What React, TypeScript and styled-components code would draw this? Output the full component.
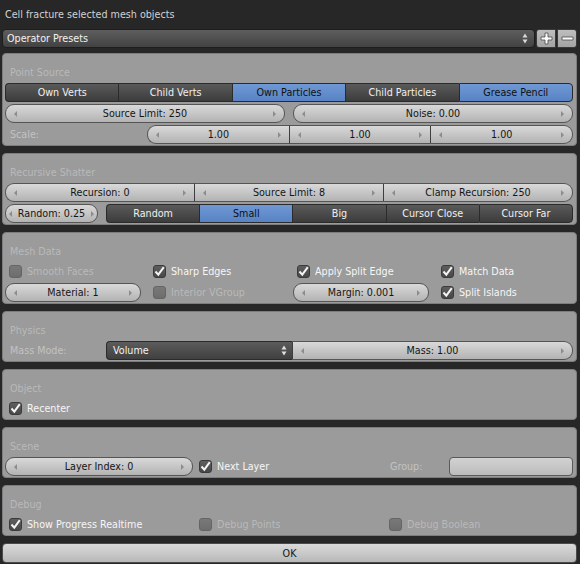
import styled, { createGlobalStyle, css } from "styled-components";

const GlobalStyle = createGlobalStyle`
    body {
        margin: 0;
        background: #262626;
        font-family: "DejaVu Sans", "Liberation Sans", sans-serif;
        font-size: 9.6px;
    }
`;

const Window = styled.div`
    width: 580px;
    height: 564px;
    overflow: hidden;
    background: #272727;
`;

const TitleBar = styled.div`
    height: 29px;
    display: flex;
    align-items: center;
    padding-left: 5px;
    color: #d2d2d2;
`;

const PresetsRow = styled.div`
    display: flex;
    height: 19px;
    margin: 0 3px 5px 2px;
    gap: 1px;
`;

const PresetSelect = styled.div`
    flex: 1;
    display: flex;
    align-items: center;
    justify-content: space-between;
    padding: 0 6px 0 4px;
    color: #f2f2f2;
    background: linear-gradient(#5e5e5e, #424242);
    border: 1px solid #1e1e1e;
    border-radius: 4px;
`;

const IconBtn = styled.div`
    width: 18px;
    display: flex;
    align-items: center;
    justify-content: center;
    background: linear-gradient(#bdbdbd, #a4a4a4);
    border: 1px solid #3a3a3a;
    border-radius: ${(p: { $side: "left" | "right" }) => (p.$side === "left" ? "3px 0 0 3px" : "0 3px 3px 0")};
`;

const Panel = styled.div`
    margin: 0 3px 7px 2px;
    background: #9b9b9b;
    border: 1px solid #7d7d7d;
    border-radius: 4px;
    padding: 8px 3px 1px 2px;
`;

const PanelTitle = styled.div`
    height: 21px;
    display: flex;
    align-items: center;
    padding-left: 5px;
    color: #b9b9b9;
`;

const Rows = styled.div`
    display: flex;
    flex-direction: column;
    gap: 2px;
`;

const Row = styled.div`
    display: flex;
    height: 19px;
    gap: ${(p: { $gap?: number }) => p.$gap ?? 8}px;
`;

const Grid = styled.div`
    display: grid;
    grid-template-columns: ${(p: { $cols: number; $gap: number }) => `repeat(${p.$cols}, 1fr)`};
    column-gap: ${(p) => p.$gap}px;
    row-gap: 2px;
    grid-auto-rows: 19px;
`;

const Label = styled.div`
    box-sizing: border-box;
    display: flex;
    align-items: center;
    padding-left: 5px;
    color: #c2c2c2;
    width: ${(p: { $w?: number }) => (p.$w ? `${p.$w}px` : "auto")};
    flex-shrink: 0;
`;

const Joined = styled.div`
    flex: 1;
    display: flex;
    min-width: 0;
`;

type Pos = "single" | "left" | "mid" | "right";

const radius = (pos: Pos, r: number) => {
    if (pos === "single") return `${r}px`;
    if (pos === "left") return `${r}px 0 0 ${r}px`;
    if (pos === "right") return `0 ${r}px ${r}px 0`;
    return "0";
};

const NumBox = styled.div<{ $pos: Pos; $w?: number }>`
    position: relative;
    box-sizing: border-box;
    height: 19px;
    ${(p) => (p.$w ? css`width: ${p.$w}px; flex-shrink: 0;` : css`flex: 1;`)}
    display: flex;
    align-items: center;
    justify-content: center;
    color: #151515;
    background: linear-gradient(#d9d9d9, #c4c4c4 55%, #b3b3b3);
    border: 1px solid #555;
    ${(p) => p.$pos === "mid" || p.$pos === "right" ? "border-left: 1px solid #3e3e3e;" : ""}
    ${(p) => p.$pos === "left" || p.$pos === "mid" ? "border-right: none;" : ""}
    border-radius: ${(p) => radius(p.$pos, 9)};
    white-space: nowrap;

    &::before, &::after {
        content: "";
        position: absolute;
        top: 6px;
        border-top: 3px solid transparent;
        border-bottom: 3px solid transparent;
    }
    &::before {
        left: ${(p) => (p.$w && p.$w < 100 ? 3 : 8)}px;
        border-right: 3px solid #8c8c8c;
    }
    &::after {
        right: ${(p) => (p.$w && p.$w < 100 ? 3 : 8)}px;
        border-left: 3px solid #8c8c8c;
    }
`;

const EnumGroup = styled.div`
    flex: 1;
    display: flex;
    min-width: 0;
`;

const EnumBtn = styled.div<{ $active?: boolean; $pos: Pos }>`
    flex: 1;
    display: flex;
    align-items: center;
    justify-content: center;
    box-sizing: border-box;
    height: 19px;
    border: 1px solid #2b2b2b;
    ${(p) => (p.$pos === "left" || p.$pos === "mid" ? "border-right: none;" : "")}
    border-radius: ${(p) => radius(p.$pos, 4)};
    color: ${(p) => (p.$active ? "#101010" : "#f0f0f0")};
    background: ${(p) =>
        p.$active ? "linear-gradient(#6f98d4, #5883c4)" : "linear-gradient(#5a5a5a, #3c3c3c)"};
    white-space: nowrap;
`;

const Dropdown = styled.div`
    width: 186px;
    flex-shrink: 0;
    box-sizing: border-box;
    display: flex;
    align-items: center;
    justify-content: space-between;
    padding: 0 5px 0 6px;
    color: #f4f4f4;
    background: linear-gradient(#5c5c5c, #404040);
    border: 1px solid #2b2b2b;
    border-right: none;
    border-radius: 4px 0 0 4px;
`;

const CheckRow = styled.div`
    display: flex;
    align-items: center;
    gap: 5px;
    padding-left: 4px;
    white-space: nowrap;
    color: ${(p: { $disabled?: boolean }) => (p.$disabled ? "#b9b9b9" : "#f6f6f6")};
`;

const Box = styled.div<{ $disabled?: boolean }>`
    width: 13px;
    height: 13px;
    box-sizing: border-box;
    border-radius: 3px;
    border: 1px solid #3a3a3a;
    background: linear-gradient(#5e5e5e, #484848);
    opacity: ${(p) => (p.$disabled ? 0.55 : 1)};
    display: flex;
    align-items: center;
    justify-content: center;
`;

const TextField = styled.div`
    flex: 1;
    box-sizing: border-box;
    background: linear-gradient(#d2d2d2, #bcbcbc);
    border: 1px solid #5a5a5a;
    border-radius: 4px;
`;

const OkButton = styled.div`
    margin: 0 3px 0 2px;
    height: 18px;
    display: flex;
    align-items: center;
    justify-content: center;
    color: #151515;
    background: linear-gradient(#dadada, #c6c6c6 60%, #b8b8b8);
    border: 1px solid #4a4a4a;
    border-radius: 4px;
`;

function UpDown({ color }: { color: string }) {
    return (
        <svg width="6" height="11" viewBox="0 0 6 11">
            <path d="M3 0.5 L5.5 4.5 L0.5 4.5 Z M3 10.5 L5.5 6.5 L0.5 6.5 Z" fill={color} />
        </svg>
    );
}

function Num({ text, pos = "single", w }: { text: string; pos?: Pos; w?: number }) {
    return (
        <NumBox $pos={pos} $w={w}>
            {text}
        </NumBox>
    );
}

function Check({ label, checked, disabled }: { label: string; checked?: boolean; disabled?: boolean }) {
    return (
        <CheckRow $disabled={disabled}>
            <Box $disabled={disabled}>
                {checked && (
                    <svg width="11" height="11" viewBox="0 0 11 11">
                        <path d="M1.5 5.5 L4.3 8.6 L9.8 1.2" stroke="#f5f5f5" strokeWidth="2" fill="none" />
                    </svg>
                )}
            </Box>
            {label}
        </CheckRow>
    );
}

function Enum({ items, active }: { items: string[]; active: string[] }) {
    return (
        <EnumGroup>
            {items.map((it, i) => (
                <EnumBtn
                    key={it}
                    $active={active.includes(it)}
                    $pos={i === 0 ? "left" : i === items.length - 1 ? "right" : "mid"}
                >
                    {it}
                </EnumBtn>
            ))}
        </EnumGroup>
    );
}

const posOf = (i: number, n: number): Pos => (i === 0 ? "left" : i === n - 1 ? "right" : "mid");

export default function App() {
    return (
        <Window>
            <GlobalStyle />
            <TitleBar>Cell fracture selected mesh objects</TitleBar>

            <PresetsRow>
                <PresetSelect>
                    Operator Presets
                    <UpDown color="#d8d8d8" />
                </PresetSelect>
                <IconBtn $side="left">
                    <svg width="13" height="13" viewBox="0 0 13 13">
                        <path d="M5 1 H8 V5 H12 V8 H8 V12 H5 V8 H1 V5 H5 Z" fill="#fafafa" stroke="#4a4a4a" strokeWidth="0.8" />
                    </svg>
                </IconBtn>
                <IconBtn $side="right">
                    <svg width="13" height="13" viewBox="0 0 13 13">
                        <path d="M1 5 H12 V8 H1 Z" fill="#fafafa" stroke="#4a4a4a" strokeWidth="0.8" />
                    </svg>
                </IconBtn>
            </PresetsRow>

            <Panel>
                <PanelTitle>Point Source</PanelTitle>
                <Rows>
                    <Row>
                        <Enum
                            items={["Own Verts", "Child Verts", "Own Particles", "Child Particles", "Grease Pencil"]}
                            active={["Own Particles", "Grease Pencil"]}
                        />
                    </Row>
                    <Row>
                        <Num text="Source Limit: 250" />
                        <Num text="Noise: 0.00" />
                    </Row>
                    <Row $gap={0}>
                        <Label $w={142}>Scale:</Label>
                        <Joined>
                            {["1.00", "1.00", "1.00"].map((v, i) => (
                                <Num key={i} text={v} pos={posOf(i, 3)} />
                            ))}
                        </Joined>
                    </Row>
                </Rows>
            </Panel>

            <Panel>
                <PanelTitle>Recursive Shatter</PanelTitle>
                <Rows>
                    <Row>
                        <Joined>
                            {["Recursion: 0", "Source Limit: 8", "Clamp Recursion: 250"].map((v, i) => (
                                <Num key={v} text={v} pos={posOf(i, 3)} />
                            ))}
                        </Joined>
                    </Row>
                    <Row>
                        <Num text="Random: 0.25" w={93} />
                        <Enum items={["Random", "Small", "Big", "Cursor Close", "Cursor Far"]} active={["Small"]} />
                    </Row>
                </Rows>
            </Panel>

            <Panel>
                <PanelTitle>Mesh Data</PanelTitle>
                <Grid $cols={4} $gap={8}>
                    <Check label="Smooth Faces" disabled />
                    <Check label="Sharp Edges" checked />
                    <Check label="Apply Split Edge" checked />
                    <Check label="Match Data" checked />
                    <Num text="Material: 1" />
                    <Check label="Interior VGroup" disabled />
                    <Num text="Margin: 0.001" />
                    <Check label="Split Islands" checked />
                </Grid>
            </Panel>

            <Panel>
                <PanelTitle>Physics</PanelTitle>
                <Row $gap={0}>
                    <Label $w={101}>Mass Mode:</Label>
                    <Dropdown>
                        Volume
                        <UpDown color="#e0e0e0" />
                    </Dropdown>
                    <Num text="Mass: 1.00" pos="right" />
                </Row>
            </Panel>

            <Panel>
                <PanelTitle>Object</PanelTitle>
                <Row>
                    <Check label="Recenter" checked />
                </Row>
            </Panel>

            <Panel>
                <PanelTitle>Scene</PanelTitle>
                <Grid $cols={3} $gap={2}>
                    <Num text="Layer Index: 0" />
                    <Check label="Next Layer" checked />
                    <Row $gap={0}>
                        <Label $w={64}>Group:</Label>
                        <TextField />
                    </Row>
                </Grid>
            </Panel>

            <Panel>
                <PanelTitle>Debug</PanelTitle>
                <Grid $cols={3} $gap={2}>
                    <Check label="Show Progress Realtime" checked />
                    <Check label="Debug Points" disabled />
                    <Check label="Debug Boolean" disabled />
                </Grid>
            </Panel>

            <OkButton>OK</OkButton>
        </Window>
    );
}
